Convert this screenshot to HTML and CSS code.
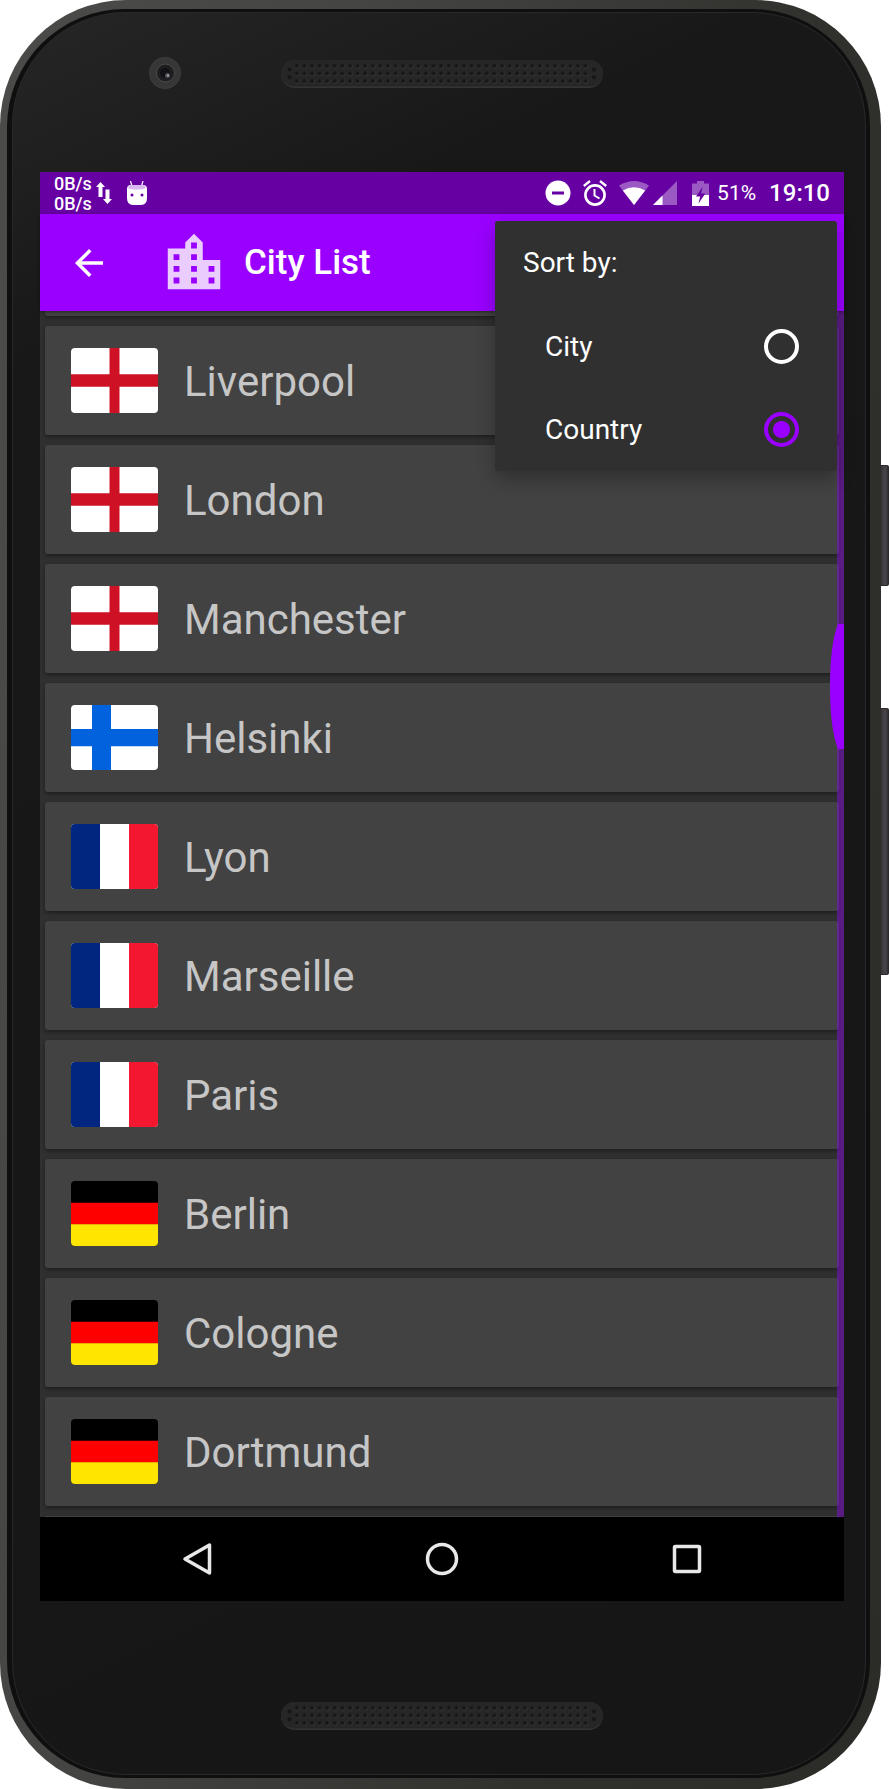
FILE: index.html
```html
<!DOCTYPE html>
<html lang="en">
<head>
<meta charset="utf-8">
<meta name="viewport" content="width=device-width, initial-scale=1">
<title>City List</title>
<link rel="stylesheet" href="styles.css">
</head>
<body>
<svg class="defs" width="0" height="0" aria-hidden="true">
  <defs>
    <pattern id="holes" width="7.6" height="7.6" patternUnits="userSpaceOnUse" x="12" y="2">
      <circle cx="4.2" cy="4.4" r="2.2" fill="#383838"/>
      <circle cx="3.8" cy="3.9" r="2" fill="#161616"/>
    </pattern>
    <symbol id="grille" viewBox="0 0 322 28">
      <rect width="322" height="28" rx="14" fill="#343434"/>
      <rect width="322" height="26.500" rx="13.250" fill="#262626"/>
      <rect x="12" y="2" width="296.400" height="22.800" fill="url(#holes)"/>
      <g fill="#161616"><circle cx="8.500" cy="9.600" r="2"/><circle cx="8.500" cy="17.200" r="2"/><circle cx="313" cy="9.600" r="2"/><circle cx="313" cy="17.200" r="2"/></g>
    </symbol>
    <symbol id="england" viewBox="0 0 87 65"><path fill="#fff" d="M0 0h87v65H0z"/><path fill="#ce1124" d="M38.500 0h10v65h-10z M0 26.200h87v12.600H0z"/></symbol>
    <symbol id="finland" viewBox="0 0 87 65"><path fill="#fff" d="M0 0h87v65H0z"/><path fill="#0062dd" d="M21 0h19v65H21z M0 24h87v17.300H0z"/></symbol>
    <symbol id="france" viewBox="0 0 87 65"><path fill="#fff" d="M0 0h87v65H0z"/><path fill="#00267f" d="M0 0h29v65H0z"/><path fill="#f31830" d="M58 0h29v65H58z"/></symbol>
    <symbol id="germany" viewBox="0 0 87 65"><path d="M0 0h87v65H0z"/><path fill="#f00" d="M0 21.700h87v22H0z"/><path fill="#ffe600" d="M0 43.300h87V65H0z"/></symbol>
  </defs>
</svg>
<div class="device">
  <div class="shell">
    <div class="rim">
      <div class="face">
        <div class="bezel bezel-top">
          <svg class="camera" viewBox="0 0 32 32" width="32" height="32" aria-hidden="true">
            <circle cx="16" cy="16" r="16" fill="#3b3b3b"/><circle cx="16" cy="16" r="14.500" fill="#363636"/><circle cx="16.500" cy="16" r="9" fill="#1e1d1f" stroke="#4a4a4a"/><circle cx="16" cy="16" r="5" fill="#121115"/><circle cx="18.500" cy="18.500" r="2.500" fill="#55505a"/><circle cx="19" cy="18.500" r="1" fill="#bbb"/>
          </svg>
          <svg class="speaker" width="322" height="28" aria-hidden="true"><use href="#grille"/></svg>
        </div>
        <main class="screen">
          <div class="status">
            <div class="speeds"><span>0B/s</span><span>0B/s</span></div>
            <svg class="traffic" viewBox="0 0 16 22" width="16" height="22" aria-hidden="true"><path fill="#fff" d="M4.500 0L9 5H6.500v10h-4V5H0z M11.500 22L7 17h2.500V7.500h4V17H16z"/></svg>
            <svg class="robot" viewBox="0 0 22 24" width="22" height="24" aria-hidden="true"><path fill="none" stroke="#fff" stroke-width="1.200" d="M4.500 0L6 5M17 0l-1.500 5"/><path fill="#fff" d="M1 8Q1 4 5 4h12q4 0 4 4v9q0 7-6 7H7q-6 0-6-7z"/><path fill="#d8b8ee" d="M2 7q1-3 4-3h10q3 0 4 3-3 1.500-9 1.500T2 7z"/><circle cx="6" cy="14" r="1.500" fill="#6600a3"/><circle cx="16" cy="14" r="1.500" fill="#6600a3"/></svg>
            <div class="system">
              <svg class="dnd" viewBox="0 0 26 26" width="26" height="26" aria-hidden="true"><circle cx="13" cy="13" r="12.500" fill="#fff"/><path fill="#6600a3" d="M7 11.500h12v3H7z"/></svg>
              <svg class="alarm" viewBox="0 0 24 26" width="24" height="26" aria-hidden="true"><g fill="none" stroke="#fff"><circle cx="12" cy="15" r="9.600" stroke-width="2.600"/><path stroke-width="2.300" d="M.8 6L7 1M23.200 6L17 1"/><path stroke-width="2" d="M11.500 9v6.500l5 3"/></g></svg>
              <svg class="wifi" viewBox="0 0 30 24" width="30" height="24" aria-hidden="true"><path fill="#fff" fill-opacity=".35" d="M0 4.500Q15-4.500 30 4.500L15 24z"/><path fill="#fff" d="M3.800 9.500Q15 3 26.200 9.500L15 24z"/></svg>
              <svg class="signal" viewBox="0 0 24 24" width="24" height="24" aria-hidden="true"><path fill="#fff" fill-opacity=".35" d="M0 24L24 0v24z"/><path fill="#fff" d="M0 24l9.500-9.500V24z"/></svg>
              <svg class="battery" viewBox="0 0 17 25" width="17" height="25" aria-hidden="true"><path fill="#fff" fill-opacity=".35" d="M5 0h7v2.500h5V14H0V2.500h5z"/><path fill="#fff" d="M0 14h17v11H0z"/><path fill="#6600a3" d="M10.500 6L4 15.500h4.200L6.500 22.500 13.300 12.500H9.200z"/></svg>
              <span class="percent">51%</span>
              <time class="clock">19:10</time>
            </div>
          </div>
          <header class="appbar">
            <button class="back" type="button" aria-label="Back"><svg viewBox="0 0 24 24" width="42" height="42"><path fill="#fff" d="M20 11H7.830l5.590-5.590L12 4l-8 8 8 8 1.410-1.410L7.830 13H20v-2z"/></svg></button>
            <svg class="city-icon" viewBox="0 0 24 24" width="70" height="70" aria-hidden="true"><path fill="#fff" fill-opacity=".8" d="M15 11V5l-3-3-3 3v2H3v14h18V11h-6zm-8 8H5v-2h2v2zm0-4H5v-2h2v2zm0-4H5V9h2v2zm6 8h-2v-2h2v2zm0-4h-2v-2h2v2zm0-4h-2V9h2v2zm0-4h-2V5h2v2zm6 12h-2v-2h2v2zm0-4h-2v-2h2v2z"/></svg>
            <h1 class="title">City List</h1>
            <div class="menu" role="radiogroup" aria-labelledby="sort-label">
              <div class="menu-row" id="sort-label">Sort by:</div>
              <label class="menu-row option" for="by-city">City<input class="radio" type="radio" name="sort" id="by-city"></label>
              <label class="menu-row option" for="by-country">Country<input class="radio" type="radio" name="sort" id="by-country" checked></label>
            </div>
          </header>
          <div class="content">
            <ul class="cities">
              <li class="peek peek-top" aria-hidden="true"></li>
              <li class="card"><svg class="flag"><use href="#england"/></svg><span>Liverpool</span></li>
              <li class="card"><svg class="flag"><use href="#england"/></svg><span>London</span></li>
              <li class="card"><svg class="flag"><use href="#england"/></svg><span>Manchester</span></li>
              <li class="card"><svg class="flag"><use href="#finland"/></svg><span>Helsinki</span></li>
              <li class="card"><svg class="flag"><use href="#france"/></svg><span>Lyon</span></li>
              <li class="card"><svg class="flag"><use href="#france"/></svg><span>Marseille</span></li>
              <li class="card"><svg class="flag"><use href="#france"/></svg><span>Paris</span></li>
              <li class="card"><svg class="flag"><use href="#germany"/></svg><span>Berlin</span></li>
              <li class="card"><svg class="flag"><use href="#germany"/></svg><span>Cologne</span></li>
              <li class="card"><svg class="flag"><use href="#germany"/></svg><span>Dortmund</span></li>
              <li class="peek peek-bottom" aria-hidden="true"></li>
            </ul>
            <div class="track"></div>
            <svg class="thumb" viewBox="0 0 14 125" width="14" height="125" aria-hidden="true"><path fill="#90f" d="M14 0H8Q0 20 0 62.500T8 125h6z"/></svg>
          </div>
          <nav class="navbar">
            <button class="nav-button" type="button" aria-label="Back"><svg viewBox="0 0 32 34" width="32" height="34"><path fill="none" stroke="#e8e8e8" stroke-width="3.500" stroke-linejoin="round" d="M28.500 3v28L4 17z"/></svg></button>
            <button class="nav-button" type="button" aria-label="Home"><svg viewBox="0 0 34 34" width="34" height="34"><circle cx="17" cy="17" r="14.500" fill="none" stroke="#e8e8e8" stroke-width="3.500"/></svg></button>
            <button class="nav-button" type="button" aria-label="Overview"><svg viewBox="0 0 34 34" width="34" height="34"><rect x="4.500" y="4.500" width="25" height="25" rx="1" fill="none" stroke="#e8e8e8" stroke-width="3.500"/></svg></button>
          </nav>
        </main>
        <div class="bezel bezel-bottom"><svg class="speaker" width="322" height="28" aria-hidden="true"><use href="#grille"/></svg></div>
      </div>
    </div>
  </div>
  <div class="side" aria-hidden="true"><div class="key key-power"></div><div class="key key-volume"></div></div>
</div>
</body>
</html>
```
FILE: styles.css
```css
* { box-sizing: border-box; }
body { margin: 0; background: #fff; font-family: Roboto, "Liberation Sans", sans-serif; color: #fff; }
svg { display: block; flex: none; }
button { border: 0; padding: 0; background: none; cursor: pointer; }
.defs { position: absolute; }

.device { display: flex; }
.shell {
  flex: 1;
  min-width: 0;
  padding: 9px 11px 11px 7px;
  border-radius: 126px;
  background: linear-gradient(100deg, #4b4b49 0%, #454543 30%, #30302d 70%, #2b2b28 100%);
}
.rim { padding: 3px 4px 3px 5px; border-radius: 118px; background: #0f0f0f; }
.face {
  padding: 0 22px 0 28px;
  border-radius: 114px;
  background: linear-gradient(155deg, #262626 0, #181818 320px, #161616 100%);
  box-shadow: inset 0 0 0 1px #282828;
}
.bezel { display: grid; grid-template-columns: 1fr auto 1fr; align-items: start; }
.bezel-top { height: 160px; padding-top: 45px; }
.bezel-top .speaker { margin-top: 3px; }
.bezel-bottom { height: 174px; padding-top: 101px; }
.bezel .speaker { grid-column: 2; }
.camera { grid-column: 1; justify-self: end; margin-right: 100px; }
.bezel-top > * { grid-row: 1; }

.side { width: 8px; padding-top: 465px; }
.key { border: 1px solid #2c2a2c; border-left: 0; border-radius: 0 2px 2px 0; background: linear-gradient(90deg, #383438, #4b464b 60%, #322f32); }
.key-power { height: 121px; }
.key-volume { height: 267px; margin-top: 122px; }

.screen { background: #303030; }
.status { display: flex; align-items: center; height: 42px; padding: 0 14px; background: #6600a3; }
.speeds { display: flex; flex-direction: column; padding-top: 2px; font-size: 18px; font-weight: 500; line-height: 20px; }
.traffic { margin-left: 4px; }
.robot { margin-left: 14px; }
.system { display: flex; align-items: center; margin-left: auto; }
.alarm { margin-left: 12px; }
.wifi { margin-left: 12px; }
.signal { margin-left: 4px; }
.battery { margin-left: 15px; }
.percent { margin-left: 8px; font-size: 21px; }
.clock { margin-left: 13px; font-size: 24px; font-weight: 500; }

.appbar { position: relative; z-index: 2; display: flex; align-items: center; height: 97px; padding-left: 28px; background: #90f; box-shadow: 0 1px 3px rgba(0, 0, 0, .4); }
.city-icon { margin-left: 49px; }
.title { margin: 0 0 0 15px; font-size: 35px; font-weight: 500; line-height: 40px; }
.menu { position: absolute; top: 7px; right: 7px; width: 342px; border-radius: 3px; background: #303030; box-shadow: 0 8px 18px rgba(0, 0, 0, .28); font-size: 28px; }
.menu-row { display: flex; align-items: center; height: 84px; padding: 0 38px 0 28px; line-height: 32px; }
.option { justify-content: space-between; height: 83px; padding-left: 50px; cursor: pointer; }
.radio { appearance: none; width: 35px; height: 35px; margin: 0; border: 4px solid #fff; border-radius: 50%; }
.radio:checked { border-color: #90f; background: radial-gradient(circle, #90f 8px, transparent 9px); }

.content { position: relative; }
.cities { display: flex; flex-direction: column; gap: 10px; margin: 0; padding: 0 5px; overflow: hidden; list-style: none; }
.card, .peek { background: #424242; box-shadow: 0 2px 4px rgba(0, 0, 0, .4); }
.card { display: flex; align-items: center; gap: 26px; height: 109px; padding: 0 26px; border-radius: 3px; color: #c6c6c6; font-size: 42px; line-height: 50px; }
.card span { padding-top: 3px; }
.flag { width: 87px; height: 65px; border-radius: 4px; }
.peek-top { height: 5px; border-radius: 0 0 3px 3px; }
.peek-bottom { height: 1px; }
.track { position: absolute; top: 0; right: 0; bottom: 0; width: 7px; background: rgba(153, 0, 255, .4); }
.thumb { position: absolute; top: 313px; right: 0; }

.navbar { display: flex; height: 84px; padding: 0 35px; background: #000; }
.nav-button { display: flex; flex: 1; align-items: center; justify-content: center; }
```
